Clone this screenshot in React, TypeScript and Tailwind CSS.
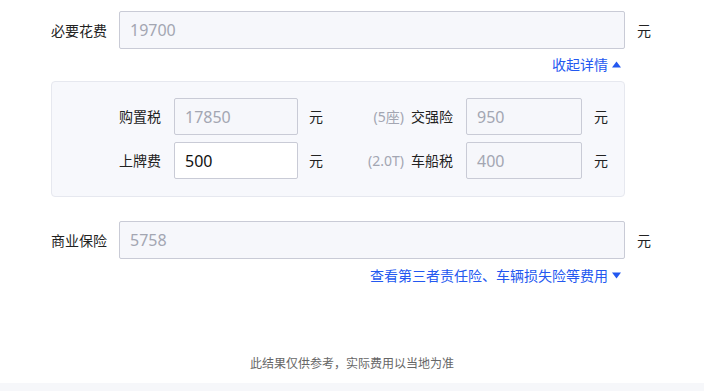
import React from 'react'

const font = { fontFamily: '"Noto Sans", "Noto Sans CJK SC", sans-serif' }

function Field({ value, width, editable }: { value: string; width: string; editable?: boolean }) {
  return (
    <div
      className={`${width} h-[37px] flex items-center pl-[10px] rounded-[2px] border border-[#c9cbd6] text-[16px] ${
        editable ? 'bg-white text-[#111]' : 'bg-[#f6f7fb] text-[#a3a6b2]'
      }`}
    >
      {value}
    </div>
  )
}

function Caret({ up }: { up?: boolean }) {
  return (
    <svg width="9" height="7" viewBox="0 0 9 7" className="ml-[4px]">
      {up ? <polygon points="4.5,0.5 9,6.5 0,6.5" fill="#2358f0" /> : <polygon points="0,0.5 9,0.5 4.5,6.5" fill="#2358f0" />}
    </svg>
  )
}

function DetailRow({
  label,
  value,
  editable,
  prefix,
  label2,
  value2,
}: {
  label: string
  value: string
  editable?: boolean
  prefix: string
  label2: string
  value2: string
}) {
  return (
    <div className="flex items-center h-[37px] pl-[67px] text-[14px] text-[#222]">
      <span className="w-[42px] text-right">{label}</span>
      <div className="ml-[13px]">
        <Field value={value} width="w-[124px]" editable={editable} />
      </div>
      <span className="ml-[11px] w-[14px]">元</span>
      <div className="w-[130px] flex justify-end items-center gap-[7px]">
        <span className="text-[#a3a6b2]">{prefix}</span>
        <span>{label2}</span>
      </div>
      <div className="ml-[13px]">
        <Field value={value2} width="w-[116px]" />
      </div>
      <span className="ml-[12px]">元</span>
    </div>
  )
}

export default function App() {
  return (
    <div className="w-[704px] h-[391px] bg-white flex flex-col" style={font}>
      <div className="flex-1 pt-[11px]">
        {/* 必要花费 */}
        <div className="flex items-center pl-[51px] text-[14px] text-[#222]">
          <span className="w-[56px] text-right">必要花费</span>
          <div className="ml-[12px]">
            <div className="w-[506px] h-[38px] flex items-center pl-[10px] rounded-[2px] border border-[#c9cbd6] bg-[#f6f7fb] text-[16px] text-[#a3a6b2]">
              19700
            </div>
          </div>
          <span className="ml-[12px]">元</span>
        </div>

        <div className="ml-[119px] w-[506px] h-[20px] mt-[5px] pr-[4px] flex justify-end items-center text-[14px] text-[#2358f0]">
          收起详情
          <Caret up />
        </div>

        {/* detail panel */}
        <div className="ml-[51px] mt-[7px] w-[574px] h-[116px] bg-[#f7f8fc] border border-[#e6e8ef] rounded-[4px] pt-[16px] flex flex-col gap-[7px]">
          <DetailRow label="购置税" value="17850" prefix="(5座)" label2="交强险" value2="950" />
          <DetailRow label="上牌费" value="500" editable prefix="(2.0T)" label2="车船税" value2="400" />
        </div>

        {/* 商业保险 */}
        <div className="flex items-center pl-[51px] mt-[24px] text-[14px] text-[#222]">
          <span className="w-[56px] text-right">商业保险</span>
          <div className="ml-[12px]">
            <div className="w-[506px] h-[38px] flex items-center pl-[10px] rounded-[2px] border border-[#c9cbd6] bg-[#f6f7fb] text-[16px] text-[#a3a6b2]">
              5758
            </div>
          </div>
          <span className="ml-[12px]">元</span>
        </div>

        <div className="ml-[119px] w-[506px] h-[20px] mt-[6px] pr-[4px] flex justify-end items-center text-[14px] text-[#2358f0]">
          查看第三者责任险、车辆损失险等费用
          <Caret />
        </div>

        <div className="mt-[70px] text-center text-[12px] text-[#666]">此结果仅供参考，实际费用以当地为准</div>
      </div>
      <div className="h-[8px] bg-[#f6f7fa]" />
    </div>
  )
}
